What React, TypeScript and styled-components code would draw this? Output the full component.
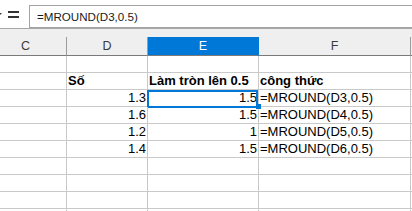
import React from 'react'
import styled, { createGlobalStyle, css } from 'styled-components'

const GlobalStyle = createGlobalStyle`
  html, body {
    margin: 0;
    padding: 0;
    background: #ffffff;
  }
  body {
    width: 412px;
    height: 211px;
    overflow: hidden;
    font-family: 'Liberation Sans', Arial, sans-serif;
  }
`

const Window = styled.div`
  width: 412px;
  height: 211px;
  overflow: hidden;
  background: #fff;
`

const FormulaBar = styled.div`
  display: flex;
  align-items: flex-start;
  height: 28px;
  box-sizing: border-box;
  background: #fff;
`

const BarIcons = styled.div`
  display: flex;
  align-items: center;
  gap: 6px;
  width: 35px;
  height: 28px;
  margin-left: -6px;
  flex-shrink: 0;
`

const FormulaInput = styled.div`
  flex: 1;
  margin-top: 5px;
  height: 23px;
  box-sizing: border-box;
  border: 1px solid #a3a3a3;
  border-right: none;
  margin-right: -10px;
  display: flex;
  align-items: center;
  padding-left: 7px;
  font-size: 11.6px;
  color: #1a1a1a;
`

const HeaderBand = styled.div`
  background: #efefef;
  border-top: 1px solid #a8a8a8;
  padding-top: 8px;
  box-sizing: border-box;
`

const Grid = styled.div`
  display: grid;
  grid-template-columns: 82px 81px 111px 152px 60px;
  margin-left: -15px;
`

const ColHead = styled.div<{ $active?: boolean }>`
  height: 19px;
  box-sizing: border-box;
  border-bottom: 1px solid #7a7a7a;
  border-right: 1px solid #9c9c9c;
  display: flex;
  align-items: center;
  justify-content: center;
  font-size: 12.5px;
  color: #3a3a3a;
  ${p =>
    p.$active &&
    css`
      background: #0078d7;
      color: #fff;
      border-right-color: #0078d7;
    `}
`

const Cell = styled.div<{ $align?: 'left' | 'right'; $bold?: boolean; $selected?: boolean }>`
  position: relative;
  height: 17px;
  box-sizing: border-box;
  border-right: 1px solid #c9c9c9;
  border-bottom: 1px solid #c9c9c9;
  font-size: 13px;
  line-height: 16px;
  color: #000;
  white-space: nowrap;
  text-align: ${p => p.$align || 'left'};
  font-weight: ${p => (p.$bold ? 700 : 400)};
  padding: 0 1px 0 1px;
  ${p =>
    p.$selected &&
    css`
      &::after {
        content: '';
        position: absolute;
        left: -1px;
        top: 0;
        right: 0;
        bottom: -2px;
        border: 2px solid #0078d7;
      }
      &::before {
        content: '';
        position: absolute;
        right: -3px;
        bottom: -3px;
        width: 5px;
        height: 5px;
        background: #0078d7;
        z-index: 2;
      }
    `}
`

const EqualsIcon = () => (
  <svg width="12" height="10" viewBox="0 0 12 10" style={{ marginTop: 2 }}>
    <rect x="0" y="1" width="11" height="2" fill="#333" />
    <rect x="0" y="6" width="11" height="2" fill="#333" />
  </svg>
)

const DropArrow = () => (
  <svg width="8" height="6" viewBox="0 0 8 6" style={{ marginTop: 3 }}>
    <path d="M0 0 L8 0 L4 4 Z" fill="#333" />
  </svg>
)

type CellData = { text?: string; align?: 'left' | 'right'; bold?: boolean; selected?: boolean }

const columns = ['C', 'D', 'E', 'F', '']

const rows: CellData[][] = [
  [{}, {}, {}, {}, {}],
  [
    {},
    { text: 'Số', bold: true },
    { text: 'Làm tròn lên 0.5', bold: true },
    { text: 'công thức', bold: true },
    {},
  ],
  [
    {},
    { text: '1.3', align: 'right' },
    { text: '1.5', align: 'right', selected: true },
    { text: '=MROUND(D3,0.5)' },
    {},
  ],
  [{}, { text: '1.6', align: 'right' }, { text: '1.5', align: 'right' }, { text: '=MROUND(D4,0.5)' }, {}],
  [{}, { text: '1.2', align: 'right' }, { text: '1', align: 'right' }, { text: '=MROUND(D5,0.5)' }, {}],
  [{}, { text: '1.4', align: 'right' }, { text: '1.5', align: 'right' }, { text: '=MROUND(D6,0.5)' }, {}],
  [{}, {}, {}, {}, {}],
  [{}, {}, {}, {}, {}],
  [{}, {}, {}, {}, {}],
  [{}, {}, {}, {}, {}],
]

export default function App() {
  return (
    <Window>
      <GlobalStyle />
      <FormulaBar>
        <BarIcons>
          <DropArrow />
          <EqualsIcon />
        </BarIcons>
        <FormulaInput>=MROUND(D3,0.5)</FormulaInput>
      </FormulaBar>
      <HeaderBand>
        <Grid>
          {columns.map((c, i) => (
            <ColHead key={i} $active={c === 'E'}>
              {c}
            </ColHead>
          ))}
        </Grid>
      </HeaderBand>
      <Grid>
        {rows.map((row, r) =>
          row.map((cell, c) => (
            <Cell key={`${r}-${c}`} $align={cell.align} $bold={cell.bold} $selected={cell.selected}>
              {cell.text}
            </Cell>
          ))
        )}
      </Grid>
    </Window>
  )
}
